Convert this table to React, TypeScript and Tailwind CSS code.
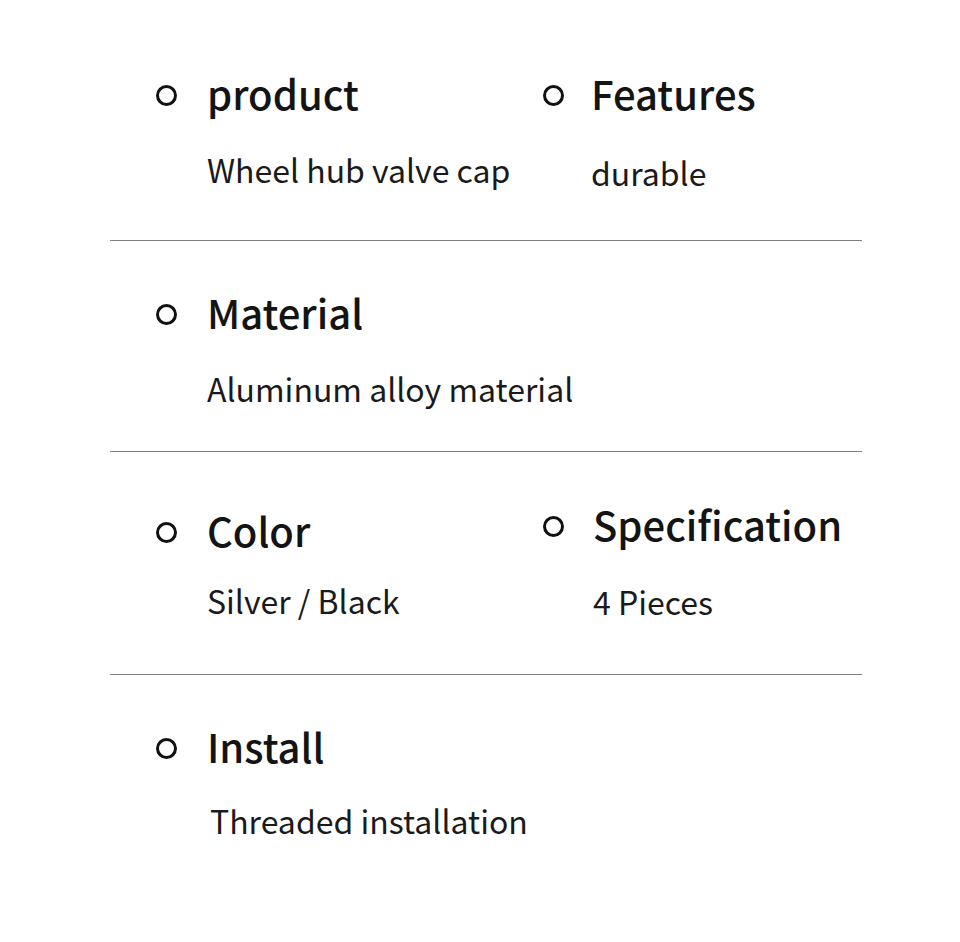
import type { ReactNode } from "react";

const FONT = { fontFamily: '"Noto Sans CJK SC", "Noto Sans", sans-serif' };

function Item({
  title,
  value,
  gap = "gap-[31px]",
  subGap = "mt-[40px]",
  subClass = "",
  className = "",
}: {
  title: string;
  value: string;
  gap?: string;
  subGap?: string;
  subClass?: string;
  className?: string;
}) {
  return (
    <div className={`flex items-start ${gap} ${className}`}>
      <div className="mt-[12px] size-[21px] shrink-0 rounded-full border-[3.5px] border-[#111111]" />
      <div className="whitespace-nowrap">
        <div className="text-[40px] font-medium leading-[40px] text-[#141414]">{title}</div>
        <div className={`${subGap} ${subClass} text-[32px] leading-[32px] text-[#1a1a1a]`}>{value}</div>
      </div>
    </div>
  );
}

function Row({ children, className }: { children: ReactNode; className: string }) {
  return <div className={`grid grid-cols-[387px_1fr] items-start pl-[46px] ${className}`}>{children}</div>;
}

export default function App() {
  return (
    <div className="h-[942px] w-[960px] bg-white" style={FONT}>
      <div className="ml-[110px] w-[752px]">
        <Row className="pt-[73px] pb-[55px]">
          <Item title="product" value="Wheel hub valve cap" gap="gap-[30px]" />
          <Item title="Features" value="durable" gap="gap-[27px]" subGap="mt-[43px]" className="-mb-[3px]" />
        </Row>
        <div className="h-px bg-[#808080]" />
        <Row className="pt-[51px] pb-[47px]">
          <Item title="Material" value="Aluminum alloy material" gap="gap-[30px]" subGap="mt-[40px]" />
        </Row>
        <div className="h-px bg-[#808080]" />
        <Row className="pt-[58px] pb-[57px]">
          <Item title="Color" value="Silver / Black" gap="gap-[30px]" subGap="mt-[34px]" />
          <Item title="Specification" value="4 Pieces" gap="gap-[29px]" subGap="mt-[41px]" className="-mt-[6px]" />
        </Row>
        <div className="h-px bg-[#808080]" />
        <Row className="pt-[51px]">
          <Item title="Install" value="Threaded installation" gap="gap-[30px]" subGap="mt-[38px]" subClass="ml-[3px]" />
        </Row>
      </div>
    </div>
  );
}
